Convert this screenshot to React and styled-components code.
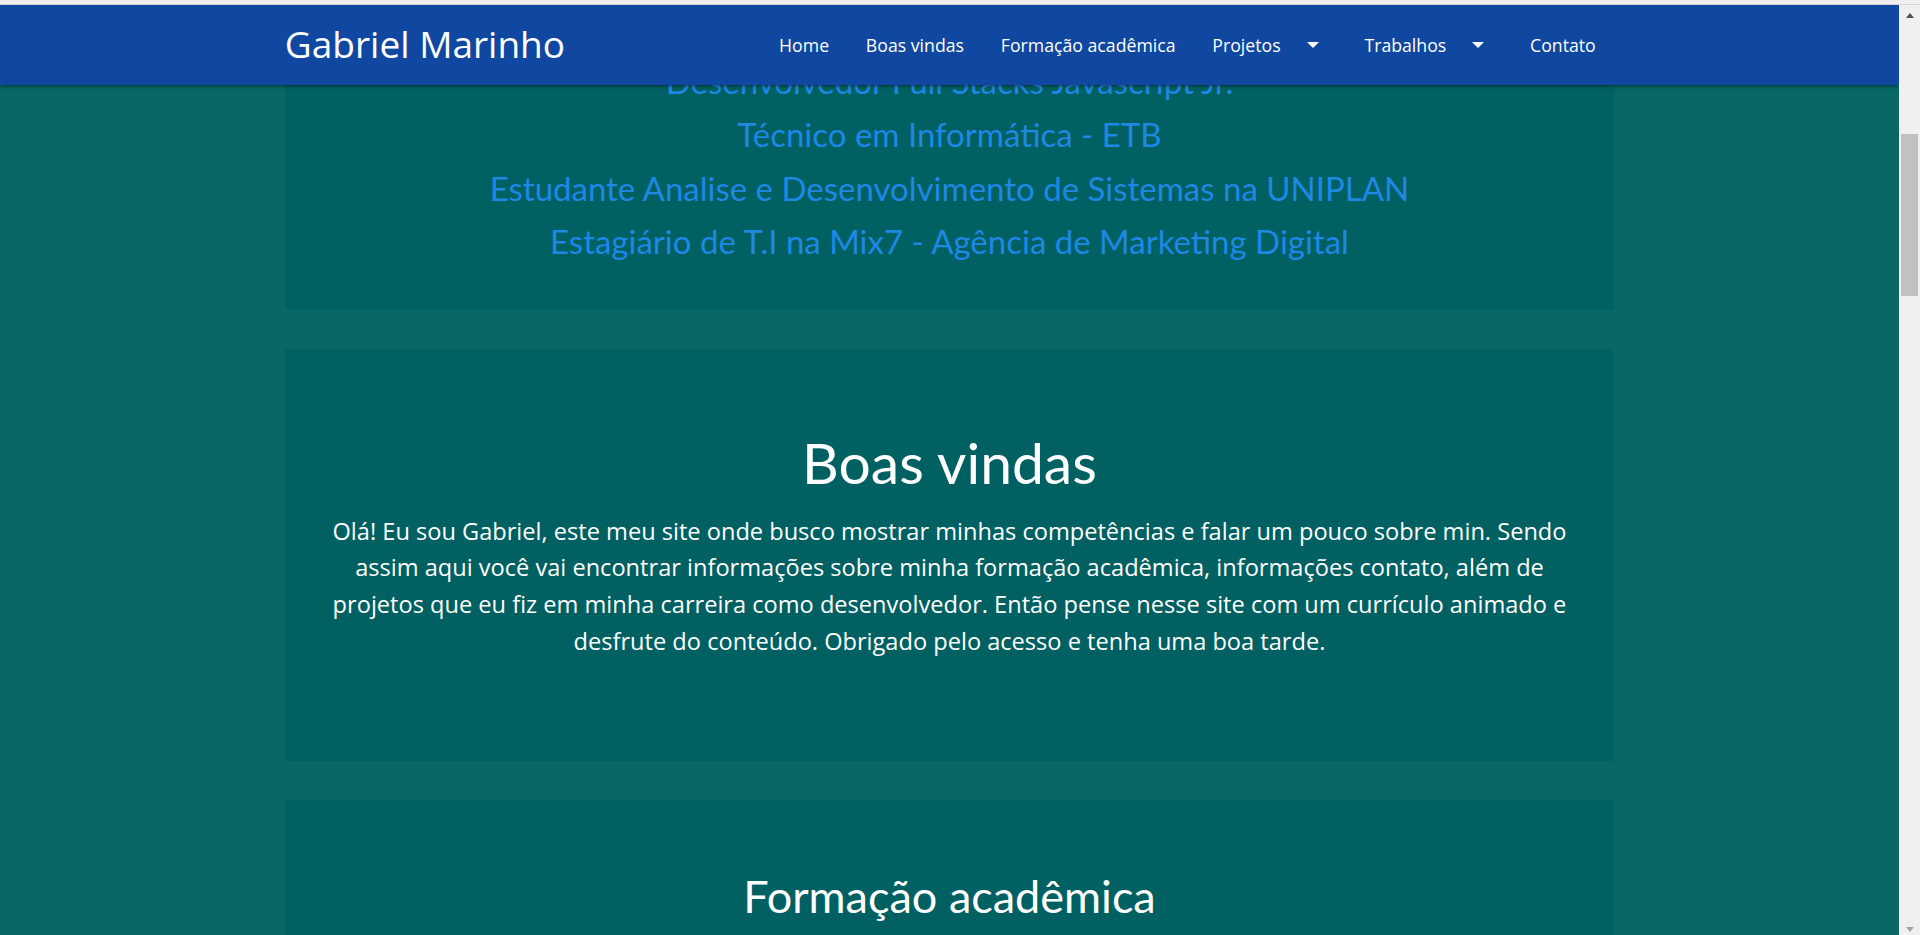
import React from 'react'
import styled, { createGlobalStyle } from 'styled-components'

const GlobalStyle = createGlobalStyle`
  html, body {
    margin: 0;
    height: 100%;
    overflow: hidden;
  }
  body {
    font-family: "Open Sans", "Noto Sans", sans-serif;
  }
`

const uiFont = `"Open Sans", "Noto Sans", sans-serif`
const comicFont = `Lato, "Noto Sans", sans-serif`

const Window = styled.div`
  height: 100vh;
  display: flex;
  flex-direction: column;
`

const TopStrip = styled.div`
  height: 4px;
  background: #f0f0f0;
  border-bottom: 1px solid #d4d4d4;
`

const Frame = styled.div`
  flex: 1;
  min-height: 0;
  display: flex;
`

const Viewport = styled.div`
  flex: 1;
  position: relative;
  overflow: hidden;
  background: #096765;
`

const Nav = styled.nav`
  position: absolute;
  top: 0;
  left: 0;
  right: 0;
  height: 80px;
  background: #0f47a1;
  box-shadow: 0 2px 2px 0 rgba(0,0,0,0.14), 0 3px 1px -2px rgba(0,0,0,0.12), 0 1px 5px 0 rgba(0,0,0,0.2);
  z-index: 2;
`

const Container = styled.div`
  width: 70%;
  margin: 0 auto;
`

const NavInner = styled(Container)`
  height: 100%;
  display: flex;
  align-items: center;
  justify-content: space-between;
`

const Brand = styled.a`
  color: #fff;
  font-family: ${uiFont};
  font-size: 37px;
  text-decoration: none;
  margin-top: -3px;
`

const Menu = styled.ul`
  list-style: none;
  margin: 0;
  padding: 0;
  display: flex;
  align-items: center;
`

const MenuLink = styled.a`
  display: flex;
  align-items: center;
  padding: 0 18.4px;
  color: #fff;
  font-family: ${uiFont};
  font-size: 17.7px;
  text-decoration: none;
`

const Caret = styled.span`
  width: 0;
  height: 0;
  border-left: 6.5px solid transparent;
  border-right: 6.5px solid transparent;
  border-top: 6.5px solid #fff;
  margin-left: 26px;
  margin-right: 9px;
`

const Main = styled(Container)`
  display: flex;
  flex-direction: column;
  gap: 39px;
`

const Card = styled.section`
  background: #006062;
  height: ${p => p.$h}px;
  box-sizing: border-box;
  padding: ${p => p.$pad};
  text-align: center;
`

const Role = styled.h5`
  margin: 0;
  color: #1e88e5;
  font-family: ${comicFont};
  font-weight: 400;
  font-size: 33px;
  line-height: 53.3px;
`

const Title = styled.h3`
  margin: 0;
  color: #fff;
  font-family: ${comicFont};
  font-weight: 400;
  font-size: ${p => p.$size}px;
  line-height: 1.1;
`

const Text = styled.p`
  margin: 19px 0 0;
  color: #fff;
  font-family: ${uiFont};
  font-size: 23.6px;
  line-height: 36.7px;
`

const Scrollbar = styled.div`
  width: 21px;
  background: #f0f0f0;
  display: flex;
  flex-direction: column;
  align-items: center;
`

const Arrow = styled.span`
  width: 0;
  height: 0;
  border-left: 4.5px solid transparent;
  border-right: 4.5px solid transparent;
  ${p => p.$down
    ? 'border-top: 5px solid #a3a3a3; margin-top: auto; margin-bottom: 3px;'
    : 'border-bottom: 5px solid #505050; margin-top: 8px;'}
`

const Thumb = styled.div`
  width: 17px;
  height: 162px;
  margin-top: 116px;
  background: #c1c1c1;
`

const links = [
  { label: 'Home' },
  { label: 'Boas vindas' },
  { label: 'Formação acadêmica' },
  { label: 'Projetos', drop: true },
  { label: 'Trabalhos', drop: true },
  { label: 'Contato' },
]

const roles = [
  'Desenvolvedor Full Stacks Javascript Jr.',
  'Técnico em Informática - ETB',
  'Estudante Analise e Desenvolvimento de Sistemas na UNIPLAN',
  'Estagiário de T.I na Mix7 - Agência de Marketing Digital',
]

export default function App() {
  return (
    <Window>
      <GlobalStyle />
      <TopStrip />
      <Frame>
        <Viewport>
          <Nav>
            <NavInner>
              <Brand href="#">Gabriel Marinho</Brand>
              <Menu>
                {links.map(l => (
                  <li key={l.label}>
                    <MenuLink href="#">
                      {l.label}
                      {l.drop && <Caret />}
                    </MenuLink>
                  </li>
                ))}
              </Menu>
            </NavInner>
          </Nav>
          <Main>
            <Card $h={305} $pad="50px 40px 0">
              {roles.map(r => <Role key={r}>{r}</Role>)}
            </Card>
            <Card $h={412} $pad="82px 40px 0">
              <Title $size={57}>Boas vindas</Title>
              <Text>
                Olá! Eu sou Gabriel, este meu site onde busco mostrar minhas competências e falar um pouco sobre min. Sendo assim aqui você vai encontrar informações sobre minha formação acadêmica, informações contato, além de projetos que eu fiz em minha carreira como desenvolvedor. Então pense nesse site com um currículo animado e desfrute do conteúdo. Obrigado pelo acesso e tenha uma boa tarde.
              </Text>
            </Card>
            <Card $h={412} $pad="72px 40px 0">
              <Title $size={45}>Formação acadêmica</Title>
            </Card>
          </Main>
        </Viewport>
        <Scrollbar>
          <Arrow />
          <Thumb />
          <Arrow $down />
        </Scrollbar>
      </Frame>
    </Window>
  )
}
